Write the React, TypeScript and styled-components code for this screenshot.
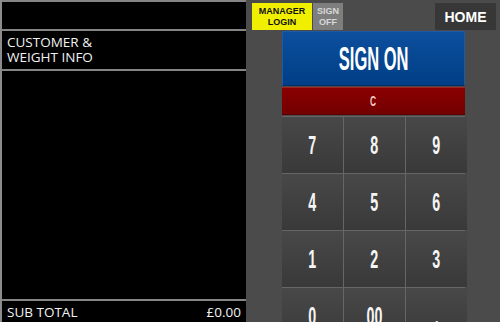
import React from "react";
import styled, { createGlobalStyle } from "styled-components";

const Global = createGlobalStyle`
  html, body { margin: 0; padding: 0; background: #4b4b4b; }
  body { width: 500px; height: 322px; overflow: hidden; }
`;

const Screen = styled.div`
  display: flex;
  width: 500px;
  height: 322px;
  background: #4b4b4b;
  overflow: hidden;
`;

const LeftPanel = styled.div`
  width: 244px;
  height: 322px;
  flex: none;
  border-left: 2px solid #8c8c8c;
  background: #000;
  display: flex;
  flex-direction: column;
  font-family: "Open Sans", "Noto Sans", sans-serif;
  color: #f2f2f2;
`;

const Divider = styled.div`
  height: 2px;
  background: #858585;
  flex: none;
`;

const Blank = styled.div<{ $h?: number }>`
  height: ${(p) => (p.$h ? `${p.$h}px` : "auto")};
  flex: ${(p) => (p.$h ? "none" : "1")};
`;

const InfoLabel = styled.div`
  height: 38px;
  flex: none;
  box-sizing: border-box;
  padding: 4px 0 0 5px;
  font-size: 13.5px;
  line-height: 15px;
`;

const TotalRow = styled.div`
  height: 21px;
  flex: none;
  display: flex;
  justify-content: space-between;
  align-items: center;
  padding: 0 5px 0 5px;
  font-size: 13.5px;
`;

const RightPanel = styled.div`
  flex: 1;
  min-height: 0;
  display: flex;
  flex-direction: column;
  padding-top: 3px;
  font-family: "Liberation Sans", Arial, sans-serif;
`;

const TopBar = styled.div`
  flex: none;
  height: 27px;
  display: flex;
  padding-left: 6px;
  padding-right: 4px;
  gap: 1px;
`;

const SmallButton = styled.div<{ $bg: string; $fg: string; $w: number }>`
  width: ${(p) => p.$w}px;
  background: ${(p) => p.$bg};
  color: ${(p) => p.$fg};
  font-weight: bold;
  font-size: 9px;
  line-height: 11px;
  text-align: center;
  display: flex;
  flex-direction: column;
  justify-content: center;
`;

const HomeButton = styled.div`
  margin-left: auto;
  width: 61px;
  background: #373737;
  color: #fff;
  font-weight: bold;
  font-size: 14px;
  display: flex;
  align-items: center;
  justify-content: center;
`;

const Pad = styled.div`
  flex: none;
  margin-left: 36px;
  margin-top: 1px;
  width: 183px;
  display: flex;
  flex-direction: column;
  gap: 1px;
`;

const Condensed = styled.span<{ $scale: number }>`
  display: inline-block;
  transform: scaleX(${(p) => p.$scale});
  font-weight: bold;
`;

const SignOn = styled.div`
  flex: none;
  height: 55px;
  box-sizing: border-box;
  background: linear-gradient(#0d4f9e, #003f86);
  border: 1px solid #1c5aa5;
  border-bottom-color: #002f66;
  color: #fff;
  font-size: 33px;
  display: flex;
  align-items: center;
  justify-content: center;
`;

const Clear = styled.div`
  flex: none;
  height: 28px;
  box-sizing: border-box;
  background: linear-gradient(#8a0000, #730000);
  border-top: 1px solid #a52222;
  border-bottom: 1px solid #5a0000;
  color: #f4c8c8;
  font-size: 14px;
  display: flex;
  align-items: center;
  justify-content: center;
`;

const Keys = styled.div`
  flex: none;
  display: grid;
  grid-template-columns: 61px 61px 61px;
  grid-auto-rows: 56px;
  gap: 1px;
  background: #666;
  border-top: 1px solid #666;
`;

const Key = styled.div`
  background: linear-gradient(#484848, #393939);
  color: #f5f5f5;
  font-size: 26px;
  display: flex;
  align-items: center;
  justify-content: center;
`;

const keys = ["7", "8", "9", "4", "5", "6", "1", "2", "3", "0", "00", "."];

export default function App() {
  return (
    <Screen>
      <Global />
      <LeftPanel>
        <Divider />
        <Blank $h={27} />
        <Divider />
        <InfoLabel>
          CUSTOMER &amp;
          <br />
          WEIGHT INFO
        </InfoLabel>
        <Divider />
        <Blank />
        <Divider />
        <TotalRow>
          <span>SUB TOTAL</span>
          <span>£0.00</span>
        </TotalRow>
      </LeftPanel>
      <RightPanel>
        <TopBar>
          <SmallButton $bg="#f0ef00" $fg="#111" $w={60}>
            <span>MANAGER</span>
            <span>LOGIN</span>
          </SmallButton>
          <SmallButton $bg="#7e7e7e" $fg="#d8d8d8" $w={30}>
            <span>SIGN</span>
            <span>OFF</span>
          </SmallButton>
          <HomeButton>HOME</HomeButton>
        </TopBar>
        <Pad>
          <SignOn>
            <Condensed $scale={0.5}>SIGN ON</Condensed>
          </SignOn>
          <Clear>
            <Condensed $scale={0.6}>C</Condensed>
          </Clear>
          <Keys>
            {keys.map((k) => (
              <Key key={k}>
                <Condensed $scale={0.55}>{k}</Condensed>
              </Key>
            ))}
          </Keys>
        </Pad>
      </RightPanel>
    </Screen>
  );
}
